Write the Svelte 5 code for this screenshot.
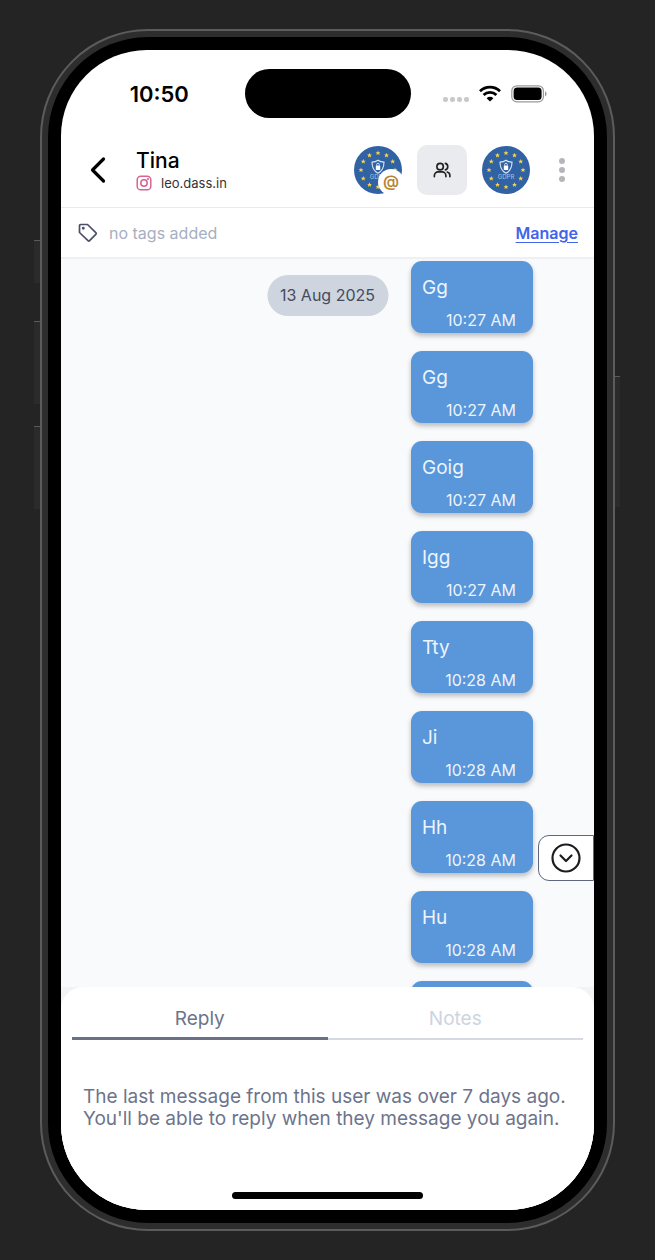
<script lang="ts">
	interface Message {
		text: string;
		time: string;
	}

	const messages: Message[] = [
		{ text: 'Gg', time: '10:27 AM' },
		{ text: 'Gg', time: '10:27 AM' },
		{ text: 'Goig', time: '10:27 AM' },
		{ text: 'Igg', time: '10:27 AM' },
		{ text: 'Tty', time: '10:28 AM' },
		{ text: 'Ji', time: '10:28 AM' },
		{ text: 'Hh', time: '10:28 AM' },
		{ text: 'Hu', time: '10:28 AM' },
		{ text: '', time: '' }
	];

	const stars = Array.from({ length: 12 }, (_, i) => {
		const angle = (i * Math.PI) / 6;
		return { x: 24 + 17 * Math.sin(angle), y: 24 - 17 * Math.cos(angle) };
	});

	let tab = $state('reply');
</script>

{#snippet avatar()}
	<svg class="avatar" viewBox="0 0 48 48" aria-hidden="true">
		<circle cx="24" cy="24" r="24" fill="#3162a3" />
		{#each stars as s}
			<path
				transform="translate({s.x} {s.y})"
				d="M0-2.5 .7-.8 2.4-.8 1.1.4 1.6 2.2 0 1.1-1.6 2.2-1.1.4-2.4-.8-.7-.8Z"
				fill="#f6d743"
			/>
		{/each}
		<path
			d="M24 14.200c1.800 1.400 3.800 1.900 6 1.900 0 5.600-1.700 9-6 11.200-4.300-2.200-6-5.600-6-11.200 2.200 0 4.200-.5 6-1.900Z"
			fill="none"
			stroke="#dce8f7"
			stroke-width="1.1"
		/>
		<rect x="21.8" y="19.4" width="4.4" height="4.6" rx=".6" fill="#fff" />
		<path d="M22.700 19.500v-1a1.300 1.300 0 0 1 2.600 0v1" fill="none" stroke="#fff" stroke-width=".8" />
		<text x="24" y="33" text-anchor="middle" font-size="6" fill="#a9c3e6">GDPR</text>
	</svg>
{/snippet}

<div class="stage">
	<div class="phone">
		<span class="key action"></span>
		<span class="key up"></span>
		<span class="key down"></span>
		<span class="key power"></span>
		<div class="bezel">
			<div class="screen">
				<div class="status">
					<span class="clock">10:50</span>
					<span class="island"></span>
					<div class="signals">
						<svg width="26" height="16" viewBox="0 0 26 16" fill="#c9c9c9" aria-hidden="true">
							<rect x="0" y="11" width="5" height="5" rx="2" />
							<rect x="7" y="11" width="5" height="5" rx="2" />
							<rect x="14" y="11" width="5" height="5" rx="2" />
							<rect x="21" y="11" width="5" height="5" rx="2" />
						</svg>
						<svg width="22" height="17" viewBox="0 0 22 17" aria-hidden="true">
							<g fill="none" stroke="#000" stroke-width="2.8">
								<path d="M1 6.200a14.300 14.300 0 0 1 20 0" />
								<path d="M4.600 9.900a9.200 9.200 0 0 1 12.800 0" />
							</g>
							<path d="M11 16.600 7.600 13.200a4.900 4.900 0 0 1 6.800 0Z" />
						</svg>
						<svg width="36" height="18" viewBox="0 0 36 18" aria-hidden="true">
							<rect x=".8" y=".8" width="31.6" height="16" rx="5" fill="none" stroke="#999" stroke-width="1.2" />
							<rect x="2.6" y="2.6" width="28" height="12.4" rx="3.5" />
							<path d="M34 6.200c2 .8 2 4.400 0 5.200Z" fill="#999" />
						</svg>
					</div>
				</div>

				<header>
					<button type="button" class="back" aria-label="Back">
						<svg width="16" height="28" viewBox="0 0 16 28" aria-hidden="true">
							<path d="M13.500 3 2.500 14l11 11" fill="none" stroke="#000" stroke-width="3.2" stroke-linecap="round" stroke-linejoin="round" />
						</svg>
					</button>
					<div class="contact">
						<h1>Tina</h1>
						<p class="handle">
							<svg width="16" height="16" viewBox="0 0 16 16" fill="none" stroke="#d9648f" stroke-width="1.5" aria-hidden="true">
								<rect x="1.2" y="1.2" width="13.6" height="13.6" rx="3.6" />
								<circle cx="8" cy="8" r="3.2" />
								<circle cx="11.9" cy="4.1" r=".4" />
							</svg>
							leo.dass.in
						</p>
					</div>
					<div class="actions">
						<span class="channel">
							{@render avatar()}
							<span class="badge">@</span>
						</span>
						<button type="button" class="people" aria-label="Assign">
							<svg width="18" height="18" viewBox="0 0 24 24" fill="none" stroke="#222" stroke-width="2.2" stroke-linecap="round" aria-hidden="true">
								<circle cx="9.5" cy="7.5" r="4.3" />
								<path d="M1.800 21v-1.500a5 5 0 0 1 5-5h5.400a5 5 0 0 1 5 5V21" />
								<path d="M16.500 3.200a4.500 4.500 0 0 1 0 8.600M19 14.700a5 5 0 0 1 3.500 4.800V21" />
							</svg>
						</button>
						{@render avatar()}
						<button type="button" class="more" aria-label="More">
							<svg width="6" height="24" viewBox="0 0 6 24" fill="#b5b6b9" aria-hidden="true">
								<circle cx="3" cy="3" r="3" />
								<circle cx="3" cy="12" r="3" />
								<circle cx="3" cy="21" r="3" />
							</svg>
						</button>
					</div>
				</header>

				<div class="tags">
					<svg width="20" height="20" viewBox="0 0 20 20" fill="none" stroke="#4b5165" stroke-width="1.7" stroke-linejoin="round" aria-hidden="true">
						<path d="M1.500 2.700Q1.500 1.500 2.700 1.500H9.500L17.800 9.700Q18.600 10.500 17.800 11.300L11.600 17.700Q10.800 18.500 10 17.700L1.500 9.500Z" />
						<circle cx="5.3" cy="5.3" r=".6" fill="#4b5165" />
					</svg>
					<span>no tags added</span>
					<a href="#manage">Manage</a>
				</div>

				<main>
					<span class="date">13 Aug 2025</span>
					<div class="messages">
						{#each messages as message}
							<article>
								<p>{message.text}</p>
								<time>{message.time}</time>
							</article>
						{/each}
					</div>
					<button type="button" class="jump" aria-label="Scroll to latest">
						<svg width="30" height="30" viewBox="0 0 30 30" fill="none" stroke="#1c1c1e" stroke-width="2.2" stroke-linecap="round" stroke-linejoin="round" aria-hidden="true">
							<circle cx="15" cy="15" r="13.5" />
							<path d="m9.500 12.500 5.500 5.500 5.500-5.500" />
						</svg>
					</button>
				</main>

				<footer>
					<div class="sheet">
						<div class="tabs" role="tablist">
							<button type="button" role="tab" aria-selected={tab === 'reply'} onclick={() => (tab = 'reply')}>
								Reply
							</button>
							<button type="button" role="tab" aria-selected={tab === 'notes'} onclick={() => (tab = 'notes')}>
								Notes
							</button>
						</div>
						<p class="notice">
							The last message from this user was over 7 days ago. You'll be able to reply when they message
							you again.
						</p>
						<span class="home"></span>
					</div>
				</footer>
			</div>
		</div>
	</div>
</div>

<style>
	:global(body) {
		margin: 0;
		background: #242424;
	}
	.stage {
		box-sizing: border-box;
		height: 100vh;
		padding: 29px 40px;
		font-family: Inter, 'Liberation Sans', sans-serif;
	}
	.phone {
		position: relative;
		box-sizing: border-box;
		height: 100%;
		padding: 6px;
		border: 2px solid #5c5c5c;
		border-radius: 108px;
		background: #2d2d2d;
	}
	.key {
		position: absolute;
		left: -8px;
		width: 6px;
		border-top: 1px solid #5a5a5a;
		background: #2b2b2b;
	}
	.action {
		top: 209px;
		height: 42px;
	}
	.up {
		top: 290px;
		height: 82px;
	}
	.down {
		top: 395px;
		height: 82px;
	}
	.power {
		left: auto;
		right: -7px;
		top: 345px;
		width: 5px;
		height: 130px;
	}
	.bezel {
		box-sizing: border-box;
		height: 100%;
		padding: 13px;
		border-radius: 100px;
		background: #000;
	}
	.screen {
		display: flex;
		flex-direction: column;
		height: 100%;
		overflow: hidden;
		border-radius: 86px;
		background: #fff;
	}
	button {
		padding: 0;
		border: 0;
		background: none;
		font: inherit;
		cursor: pointer;
	}
	svg {
		display: block;
		flex: none;
	}
	h1,
	p {
		margin: 0;
	}

	.status {
		display: grid;
		grid-template-columns: 1fr 166px 1fr;
		align-items: center;
		padding: 19px 0 15px;
	}
	.clock {
		padding-left: 13px;
		text-align: center;
		font-size: 22px;
		font-weight: 600;
	}
	.island {
		height: 49px;
		border-radius: 25px;
		background: #000;
	}
	.signals {
		display: flex;
		justify-content: flex-end;
		align-items: center;
		gap: 10px;
		padding-right: 47px;
	}

	header {
		display: flex;
		align-items: center;
		height: 74px;
		padding: 0 26px 0 29px;
		border-bottom: 1px solid #e9eaec;
	}
	.contact {
		flex: 1;
		padding-left: 30px;
	}
	h1 {
		padding-top: 2px;
		font-size: 21px;
		font-weight: 500;
		line-height: 24px;
	}
	.handle {
		display: flex;
		align-items: center;
		gap: 9px;
		color: #333;
		font-size: 13px;
		line-height: 20px;
	}
	.actions {
		display: flex;
		align-items: center;
		gap: 15px;
	}
	.avatar {
		width: 48px;
		height: 48px;
	}
	.channel {
		position: relative;
	}
	.badge {
		position: absolute;
		right: -2px;
		bottom: -1px;
		width: 26px;
		height: 26px;
		border-radius: 13px;
		background: #fff;
		color: #b9822f;
		text-align: center;
		font-size: 16px;
		font-weight: 600;
		line-height: 24px;
	}
	.people {
		display: grid;
		place-items: center;
		width: 50px;
		height: 50px;
		border-radius: 10px;
		background: #eaebef;
	}
	.more {
		padding: 4px 3px 4px 14px;
	}

	.tags {
		display: flex;
		align-items: center;
		gap: 11px;
		height: 49px;
		padding: 0 16px 0 17px;
		border-bottom: 2px solid #eef0f4;
		color: #a6afc0;
		font-size: 16px;
	}
	.tags a {
		margin-left: auto;
		color: #4263eb;
		font-weight: 600;
		text-underline-offset: 3px;
	}

	main {
		position: relative;
		flex: 1;
		min-height: 0;
		overflow: hidden;
		background: #f9fafc;
	}
	.date {
		position: absolute;
		top: 16px;
		left: 50%;
		padding: 0 13px;
		border-radius: 21px;
		background: #ced5df;
		color: #454b5e;
		font-size: 16px;
		line-height: 41px;
		white-space: nowrap;
		transform: translateX(-50%);
	}
	.messages {
		display: flex;
		flex-direction: column;
		align-items: flex-end;
		gap: 18px;
		padding: 2px 61px 0 0;
	}
	article {
		display: flex;
		flex-direction: column;
		box-sizing: border-box;
		width: 122px;
		height: 72px;
		padding: 15px 17px 3px 11px;
		justify-content: space-between;
		border-radius: 11px;
		background: #5996da;
		box-shadow: 0 3px 5px rgb(0 0 0 / 25%);
		color: #edf4fc;
		font-size: 19px;
		line-height: 24px;
	}
	time {
		align-self: flex-end;
		font-size: 16px;
		line-height: 20px;
	}
	.jump {
		position: absolute;
		right: 0;
		bottom: 106px;
		padding: 7px 12px;
		border: 1px solid #5f667f;
		border-radius: 11px 0 0 11px;
		background: #fff;
	}

	footer {
		background: #f2f3f7;
	}
	.sheet {
		display: flex;
		flex-direction: column;
		padding: 0 11px 11px;
		border-radius: 22px 22px 0 0;
		background: #fff;
	}
	.tabs {
		display: flex;
	}
	.tabs button {
		flex: 1;
		box-sizing: border-box;
		height: 53px;
		padding-top: 12px;
		border-bottom: 2px solid #d5d9e4;
		color: #cdd4df;
		font-size: 19px;
	}
	.tabs button[aria-selected='true'] {
		border-bottom: 3px solid #697187;
		color: #6c748b;
	}
	.notice {
		padding: 46px 11px 62px;
		color: #6c748b;
		font-size: 19px;
		line-height: 22px;
	}
	.home {
		align-self: center;
		width: 191px;
		height: 7px;
		border-radius: 4px;
		background: #000;
	}
</style>
